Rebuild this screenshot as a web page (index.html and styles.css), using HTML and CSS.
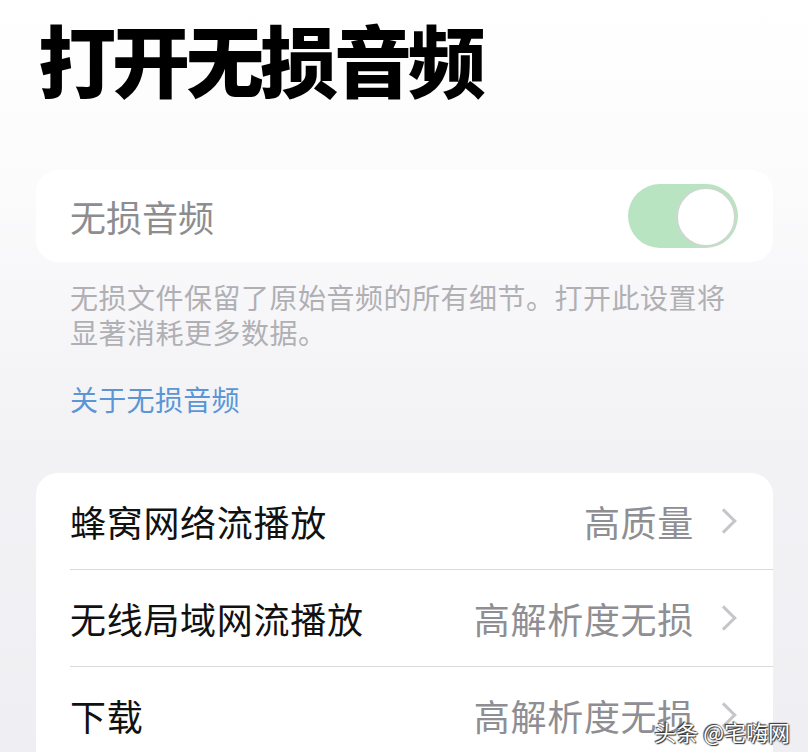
FILE: index.html
```html
<!DOCTYPE html>
<html lang="zh-CN">
<head>
  <meta charset="UTF-8">
  <meta name="viewport" content="width=device-width, initial-scale=1.0">
  <title>打开无损音频</title>
  <link rel="stylesheet" href="styles.css">
</head>
<body>

  <h1 class="title">打开无损音频</h1>

  <div class="card toggle-card">
    <span class="toggle-label">无损音频</span>
    <div class="switch">
      <div class="knob"></div>
    </div>
  </div>

  <p class="note">无损文件保留了原始音频的所有细节。打开此设置将显著消耗更多数据。</p>

  <a class="about-link" href="#">关于无损音频</a>

  <div class="card list-card">
    <div class="row">
      <span class="row-label">蜂窝网络流播放</span>
      <span class="row-value">高质量</span>
      <span class="chevron"></span>
    </div>
    <div class="row">
      <span class="row-label">无线局域网流播放</span>
      <span class="row-value">高解析度无损</span>
      <span class="chevron"></span>
    </div>
    <div class="row">
      <span class="row-label">下载</span>
      <span class="row-value">高解析度无损</span>
      <span class="chevron"></span>
    </div>
  </div>

  <div class="watermark">头条 @宅嗨网</div>

</body>
</html>
```

FILE: styles.css
```css
body {
  margin: 0;
  padding: 0;
  height: 752px;
  overflow: hidden;
  position: relative;
  background: linear-gradient(180deg, #ffffff 0%, #fbfbfc 25%, #f3f3f6 55%, #efeff3 100%);
  font-family: "Noto Sans CJK SC", "Noto Sans", sans-serif;
}

.title {
  margin: 19px 0 0 38px;
  font-size: 78px;
  line-height: 78px;
  font-weight: 900;
  letter-spacing: -4px;
  color: #000;
}

.card {
  margin: 0 35px 0 36px;
  background: #fff;
  border-radius: 22px;
}

.toggle-card {
  margin-top: 73px;
  height: 92px;
  display: flex;
  align-items: center;
  justify-content: space-between;
  padding: 0 35px 0 34px;
}

.toggle-label {
  font-size: 36px;
  line-height: 36px;
  color: #8d8d8f;
}

.switch {
  position: relative;
  width: 110px;
  height: 64px;
  border-radius: 32px;
  background: #b9e4c2;
}

.knob {
  position: absolute;
  top: 3px;
  right: 2px;
  width: 56px;
  height: 56px;
  border-radius: 50%;
  background: #fff;
  border: 2px solid #ccd8ce;
}

.note {
  margin: 18px 0 0 70px;
  max-width: 670px;
  font-size: 28px;
  line-height: 35px;
  letter-spacing: 0.5px;
  color: #b0b0b4;
}

.about-link {
  display: block;
  margin: 32px 0 0 70px;
  font-size: 28px;
  line-height: 35px;
  letter-spacing: 0.3px;
  color: #5a96d6;
  text-decoration: none;
}

.list-card {
  margin-top: 56px;
  padding-bottom: 20px;
}

.row {
  display: flex;
  align-items: center;
  height: 96px;
  margin-left: 34px;
  padding-right: 36px;
  border-bottom: 1px solid #dadade;
}

.row:last-child {
  border-bottom: none;
}

.row-label {
  flex: 1;
  font-size: 36px;
  line-height: 36px;
  letter-spacing: 0.7px;
  color: #111;
}

.row-value {
  font-size: 36px;
  line-height: 36px;
  letter-spacing: 0.7px;
  color: #8e8e93;
}

.chevron {
  width: 15px;
  height: 15px;
  margin-left: 21px;
  margin-right: 4px;
  border-top: 3px solid #c6c6ca;
  border-right: 3px solid #c6c6ca;
  transform: rotate(45deg);
}

.watermark {
  position: absolute;
  right: 18px;
  bottom: 6px;
  font-size: 22px;
  line-height: 30px;
  color: #fff;
  text-shadow: 0 0 2px #333, 1px 1px 1px #333, -1px -1px 1px #333;
}
```
